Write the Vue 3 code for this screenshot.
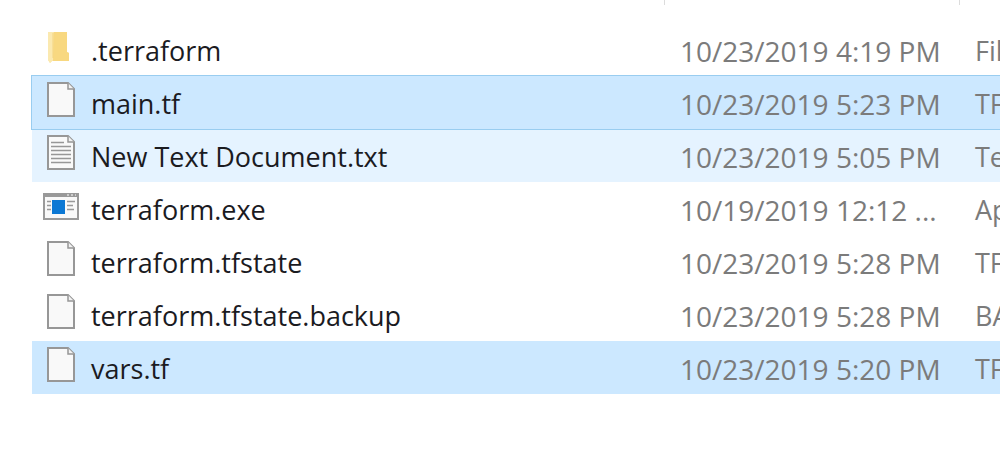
<script setup>
const files = [
  { icon: 'folder', name: '.terraform', date: '10/23/2019 4:19 PM', type: 'Fil' },
  { icon: 'file', name: 'main.tf', date: '10/23/2019 5:23 PM', type: 'TF', state: 'focused' },
  { icon: 'text', name: 'New Text Document.txt', date: '10/23/2019 5:05 PM', type: 'Te', state: 'hovered' },
  { icon: 'app', name: 'terraform.exe', date: '10/19/2019 12:12 ...', type: 'Ap' },
  { icon: 'file', name: 'terraform.tfstate', date: '10/23/2019 5:28 PM', type: 'TF' },
  { icon: 'file', name: 'terraform.tfstate.backup', date: '10/23/2019 5:28 PM', type: 'BA' },
  { icon: 'file', name: 'vars.tf', date: '10/23/2019 5:20 PM', type: 'TF', state: 'selected' },
]
</script>

<template>
  <main class="explorer">
    <table class="files">
      <colgroup>
        <col />
        <col class="col-date" />
        <col class="col-type" />
      </colgroup>
      <thead>
        <tr>
          <th><span class="divider"></span></th>
          <th><span class="divider"></span></th>
          <th></th>
        </tr>
      </thead>
      <tbody>
        <tr v-for="file in files" :key="file.name" :class="file.state">
          <td>
            <div class="name">
              <svg v-if="file.icon === 'folder'" class="icon" width="36" height="38" viewBox="0 0 36 38" aria-hidden="true">
                <path d="M5 4h19v20l2 1v8H9l-2 2-2-3z" fill="#fbe5a4" />
                <path d="M11 4h13v20l2 1v8H10z" fill="#f8d880" />
                <path d="M5 4h5v28l-3 3-2-3z" fill="#fbe9b0" />
                <path d="M10 5v25" stroke="#f4d47f" stroke-width="1" />
              </svg>
              <svg v-else-if="file.icon === 'app'" class="icon" width="36" height="38" viewBox="0 0 36 38" aria-hidden="true">
                <rect x="1" y="7" width="34" height="25" fill="#f9f9f9" stroke="#9a9a9a" stroke-width="2" />
                <path d="M0 8h36" stroke="#999" stroke-width="4" />
                <path d="M24 8h2M28 8h2M32 8h1" stroke="#ccc" stroke-width="2" />
                <path d="M4 14.500h4M4 18.500h4M4 22.500h4M24 14.500h8M24 18.500h6M24 22.500h7" stroke="#999" stroke-width="1.500" />
                <rect x="9" y="13" width="13" height="14" fill="#0c78d4" />
              </svg>
              <svg v-else class="icon" width="36" height="38" viewBox="0 0 36 38" aria-hidden="true">
                <path d="M5 2h20l6 6v27H5z" fill="#f9f9f9" stroke="#979797" stroke-width="2" />
                <path d="M25 2v6h6" fill="#f2f2f2" stroke="#979797" stroke-width="1.500" />
                <path v-if="file.icon === 'text'" d="M8 8.500h13M8 12.500h20M8 16.500h20M8 20.500h20M8 24.500h20M8 28.500h20" stroke="#979797" stroke-width="1.500" />
              </svg>
              <span class="label">{{ file.name }}</span>
            </div>
          </td>
          <td class="meta date">{{ file.date }}</td>
          <td class="meta">{{ file.type }}</td>
        </tr>
      </tbody>
    </table>
  </main>
</template>

<style>
body {
  background: #fff;
}
</style>

<style scoped>
.explorer {
  padding-left: 32px;
  overflow: hidden;
  font-family: "Open Sans", "Noto Sans", sans-serif;
  font-size: 27px;
  line-height: 36px;
  color: #1b1b1f;
}

.files {
  width: 100%;
  table-layout: fixed;
  border-collapse: collapse;
}

.col-date {
  width: 295px;
}

.col-type {
  width: 40px;
}

th {
  height: 23px;
  padding: 0;
  vertical-align: top;
}

.divider {
  display: block;
  height: 5px;
  border-right: 1px solid #dcdcdc;
}

td {
  box-sizing: border-box;
  height: 53px;
  padding: 0;
  overflow: hidden;
  white-space: nowrap;
}

.name {
  display: flex;
  align-items: center;
  gap: 12px;
  padding-left: 11px;
}

.icon {
  flex: none;
  margin-bottom: 6px;
}

.label {
  padding-top: 2px;
}

.meta {
  padding-top: 2px;
  padding-left: 15px;
  color: #7b7b7b;
}

.date {
  font-size: 28px;
}

.focused {
  background: #cce8ff;
  outline: 1px solid #99cdf0;
}

.hovered {
  background: #e5f3ff;
}

.selected {
  background: #cce8ff;
}
</style>
